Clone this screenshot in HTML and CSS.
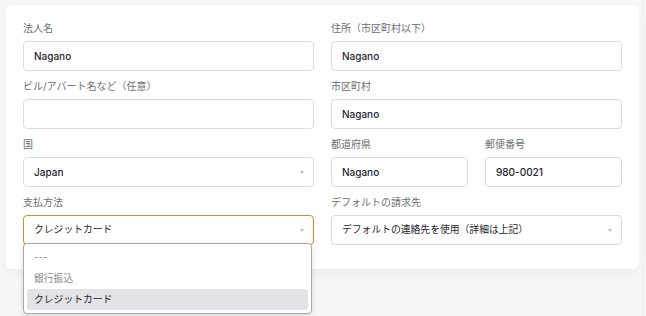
FILE: index.html
```html
<!DOCTYPE html>
<html lang="ja">
<head>
    <meta charset="UTF-8">
    <meta name="viewport" content="width=device-width, initial-scale=1.0">
    <title>請求先情報</title>
    <link rel="stylesheet" href="styles.css">
</head>
<body>
    <div class="page">
        <form class="card">
            <div class="form-grid">
                <div class="field">
                    <label class="field-label">法人名</label>
                    <div class="input">Nagano</div>
                </div>
                <div class="field">
                    <label class="field-label">住所（市区町村以下）</label>
                    <div class="input">Nagano</div>
                </div>

                <div class="field">
                    <label class="field-label">ビル/アパート名など（任意）</label>
                    <div class="input"></div>
                </div>
                <div class="field">
                    <label class="field-label">市区町村</label>
                    <div class="input">Nagano</div>
                </div>

                <div class="field">
                    <label class="field-label">国</label>
                    <div class="input select">Japan<span class="caret"></span></div>
                </div>
                <div class="field-pair">
                    <div class="field">
                        <label class="field-label">都道府県</label>
                        <div class="input">Nagano</div>
                    </div>
                    <div class="field">
                        <label class="field-label">郵便番号</label>
                        <div class="input">980-0021</div>
                    </div>
                </div>

                <div class="field dropdown-wrap">
                    <label class="field-label">支払方法</label>
                    <div class="input select jp is-open">クレジットカード<span class="caret"></span></div>
                    <ul class="dropdown">
                        <li class="option muted">---</li>
                        <li class="option muted">銀行振込</li>
                        <li class="option selected">クレジットカード</li>
                    </ul>
                </div>
                <div class="field">
                    <label class="field-label">デフォルトの請求先</label>
                    <div class="input select jp">デフォルトの連絡先を使用（詳細は上記）<span class="caret"></span></div>
                </div>
            </div>
        </form>
    </div>
    <div class="scroll-edge"></div>
</body>
</html>
```

FILE: styles.css
```css
:root {
    --label: #6a6d72;
    --text: #1f2430;
    --border: #dcdcdf;
    --focus: #e5822f;
    --bg: #f7f7f8;
}

* {
    box-sizing: border-box;
}

body {
    margin: 0;
    background: var(--bg);
    font-family: 'Inter', 'Noto Sans CJK JP', sans-serif;
    color: var(--text);
    height: 316px;
    overflow: hidden;
}

.page {
    padding: 5px 8px 0 6px;
}

.card {
    width: 633px;
    background: #fff;
    border-radius: 6px;
    padding: 17px 17px 24px;
    box-shadow: 0 6px 14px rgba(0, 0, 0, 0.04);
}

.form-grid {
    display: grid;
    grid-template-columns: 291px 291px;
    column-gap: 17px;
    row-gap: 9px;
}

.field-pair {
    display: grid;
    grid-template-columns: 137px 137px;
    column-gap: 17px;
}

.field-label {
    display: block;
    font-size: 10px;
    line-height: 13px;
    margin-bottom: 6px;
    color: var(--label);
}

.input {
    position: relative;
    height: 30px;
    border: 1px solid var(--border);
    border-radius: 4px;
    padding: 0 10px;
    font-size: 10px;
    font-weight: 500;
    line-height: 28px;
    white-space: nowrap;
}

/* japanese values render lighter */
.jp {
    font-size: 9.8px;
    font-weight: 400;
}

.caret {
    position: absolute;
    right: 9px;
    top: 13px;
    width: 0;
    height: 0;
    border-left: 2.5px solid transparent;
    border-right: 2.5px solid transparent;
    border-top: 3px solid #b9bbc0;
}

.is-open {
    border-color: var(--focus);
}

/* open dropdown */
.dropdown-wrap {
    position: relative;
}

.dropdown {
    position: absolute;
    left: 0;
    top: 47px;
    width: 289px;
    margin: 0;
    padding: 3px;
    list-style: none;
    background: #fff;
    border: 1px solid #a7a9ad;
    border-radius: 4px;
    box-shadow: 0 2px 6px rgba(0, 0, 0, 0.12);
    z-index: 10;
}

.option {
    height: 21px;
    line-height: 21px;
    padding: 0 7px;
    font-size: 9.8px;
    border-radius: 3px;
}

.muted {
    color: #8b8d92;
}

.selected {
    background: #e2e2e7;
    color: var(--text);
}

.scroll-edge {
    position: fixed;
    top: 0;
    right: 2px;
    width: 1px;
    height: 100%;
    background: #ececec;
}
```
